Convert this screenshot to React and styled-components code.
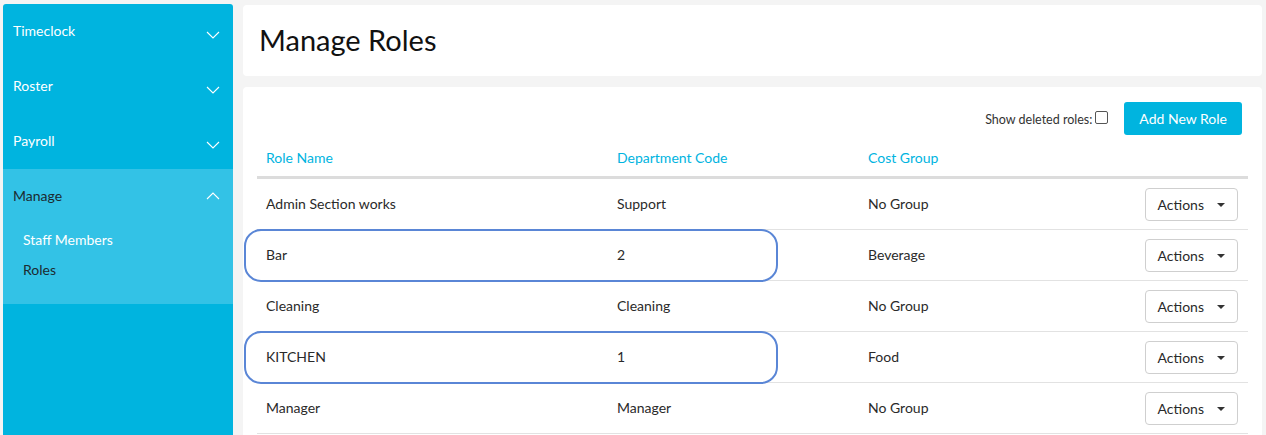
import React from "react";
import styled, { createGlobalStyle } from "styled-components";

const GlobalStyle = createGlobalStyle`
  html, body {
    margin: 0;
    padding: 0;
    background: #f4f4f4;
    font-family: Lato, "Noto Sans", "Liberation Sans", sans-serif;
  }
  * { box-sizing: border-box; }
`;

const Page = styled.div`
  display: flex;
  align-items: flex-start;
  height: 435px;
  overflow: hidden;
`;

const Sidebar = styled.nav`
  width: 230px;
  margin: 4px 0 0 3px;
  height: 431px;
  background: #00b4df;
  border-radius: 3px 3px 0 0;
  flex-shrink: 0;
`;

const Section = styled.div`
  background: ${(p) => (p.open ? "#33c2e6" : "transparent")};
  padding-bottom: ${(p) => (p.open ? "20px" : "0")};
`;

const SectionHead = styled.div`
  height: 55px;
  display: flex;
  align-items: center;
  justify-content: space-between;
  padding: 0 13px 0 10px;
  font-size: 14px;
  color: ${(p) => (p.open ? "#1c2a30" : "#fff")};
  & > span {
    margin-top: -2px;
  }
`;

const Chevron = styled.svg`
  width: 14px;
  height: 9px;
  margin-top: ${(p) => (p.up ? "-3px" : "7px")};
`;

const SubItem = styled.div`
  padding: 0 20px;
  height: 30px;
  display: flex;
  align-items: center;
  font-size: 14px;
  color: ${(p) => (p.active ? "#1c2a30" : "#fff")};
`;

const Main = styled.main`
  margin: 5px 0 0 10px;
  width: 1019px;
  display: flex;
  flex-direction: column;
  gap: 11px;
`;

const Card = styled.div`
  background: #fff;
  border-radius: 4px;
`;

const TitleCard = styled(Card)`
  height: 71px;
  display: flex;
  align-items: center;
  padding-left: 16px;
`;

const Title = styled.h1`
  margin: 0 0 2px;
  font-size: 29px;
  font-weight: 400;
  color: #111;
`;

const ListCard = styled(Card)`
  padding: 15px 14px 0 14px;
  height: 360px;
`;

const Toolbar = styled.div`
  display: flex;
  justify-content: flex-end;
  align-items: center;
  gap: 16px;
  padding-right: 6px;
`;

const ShowDeleted = styled.label`
  display: flex;
  align-items: center;
  gap: 3px;
  font-size: 12.5px;
  color: #333;
  margin-top: 2px;
`;

const Check = styled.span`
  width: 13px;
  height: 13px;
  border: 1px solid #555;
  border-radius: 2px;
  display: inline-block;
  margin-top: -4px;
`;

const PrimaryButton = styled.button`
  background: #00b4df;
  color: #fff;
  border: none;
  border-radius: 3px;
  height: 33px;
  padding: 0 15px;
  font-family: inherit;
  font-size: 14px;
`;

const HeadRow = styled.div`
  display: grid;
  grid-template-columns: 351px 251px 1fr;
  height: 42px;
  align-items: center;
  border-bottom: 3px solid #dcdcdc;
  margin-top: 2px;
`;

const HeadCell = styled.div`
  padding-left: 9px;
  font-size: 14px;
  color: #00b4df;
  margin-top: 1px;
`;

const Row = styled.div`
  position: relative;
  display: grid;
  grid-template-columns: 351px 251px 1fr auto;
  height: 51px;
  align-items: center;
  border-bottom: 1px solid #e2e2e2;
`;

const Cell = styled.div`
  padding-left: 9px;
  font-size: 14px;
  color: #2a2a2a;
  margin-top: -1px;
`;

const ActionsButton = styled.button`
  display: flex;
  align-items: center;
  gap: 13px;
  height: 33px;
  padding: 0 12px 0 12px;
  margin-right: 10px;
  background: #fff;
  border: 1px solid #cfcfcf;
  border-radius: 4px;
  font-family: inherit;
  font-size: 14px;
  color: #2a2a2a;
`;

const Caret = styled.span`
  width: 0;
  height: 0;
  border-left: 4px solid transparent;
  border-right: 4px solid transparent;
  border-top: 4px solid #333;
  margin-top: 2px;
`;

const Highlight = styled.div`
  position: absolute;
  left: -13px;
  top: -1px;
  width: 534px;
  height: 53px;
  border: 2.5px solid #5a86d6;
  border-radius: 17px;
  pointer-events: none;
`;

const ChevronIcon = ({ up }) => (
  <Chevron up={up} viewBox="0 0 14 9">
    <path
      d={up ? "M1 8 L7 2 L13 8" : "M1 1 L7 7 L13 1"}
      fill="none"
      stroke="#fff"
      strokeWidth="1.1"
    />
  </Chevron>
);

const roles = [
  { name: "Admin Section works", code: "Support", group: "No Group" },
  { name: "Bar", code: "2", group: "Beverage", marked: true },
  { name: "Cleaning", code: "Cleaning", group: "No Group" },
  { name: "KITCHEN", code: "1", group: "Food", marked: true },
  { name: "Manager", code: "Manager", group: "No Group" },
];

const App = () => {
  return (
    <>
      <GlobalStyle />
      <Page>
        <Sidebar>
          {["Timeclock", "Roster", "Payroll"].map((s) => (
            <Section key={s}>
              <SectionHead>
                <span>{s}</span>
                <ChevronIcon />
              </SectionHead>
            </Section>
          ))}
          <Section open>
            <SectionHead open>
              <span>Manage</span>
              <ChevronIcon up />
            </SectionHead>
            <SubItem>Staff Members</SubItem>
            <SubItem active>Roles</SubItem>
          </Section>
        </Sidebar>
        <Main>
          <TitleCard>
            <Title>Manage Roles</Title>
          </TitleCard>
          <ListCard>
            <Toolbar>
              <ShowDeleted>
                Show deleted roles: <Check />
              </ShowDeleted>
              <PrimaryButton>Add New Role</PrimaryButton>
            </Toolbar>
            <HeadRow>
              <HeadCell>Role Name</HeadCell>
              <HeadCell>Department Code</HeadCell>
              <HeadCell>Cost Group</HeadCell>
            </HeadRow>
            {roles.map((r) => (
              <Row key={r.name}>
                <Cell>{r.name}</Cell>
                <Cell>{r.code}</Cell>
                <Cell>{r.group}</Cell>
                <ActionsButton>
                  Actions <Caret />
                </ActionsButton>
                {r.marked && <Highlight />}
              </Row>
            ))}
          </ListCard>
        </Main>
      </Page>
    </>
  );
};

export default App;
